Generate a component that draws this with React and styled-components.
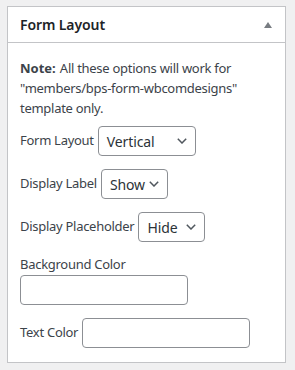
import React from "react";
import styled, { createGlobalStyle } from "styled-components";

const Global = createGlobalStyle`
  html, body { margin: 0; padding: 0; background: #f0f0f1; }
  body { font-family: "Noto Sans", "Open Sans", sans-serif; color: #3c434a; font-size: 13px; letter-spacing: -0.28px; }
  #root { padding: 6px 9px 8px 7px; }
`;

const Panel = styled.div`
  background: #fff;
  border: 1px solid #c3c4c7;
  box-sizing: border-box;
  width: 279px;
`;

const Header = styled.div`
  display: flex;
  align-items: center;
  justify-content: space-between;
  height: 35px;
  padding: 0 12px;
  border-bottom: 1px solid #c3c4c7;
`;

const Title = styled.h2`
  margin: 0;
  font-size: 14px;
  font-weight: 600;
  color: #1d2327;
  letter-spacing: -0.1px;
`;

const Toggle = styled.span`
  width: 0;
  height: 0;
  border-left: 4px solid transparent;
  border-right: 4px solid transparent;
  border-bottom: 6px solid #787c82;
  margin-right: 1px;
`;

const Body = styled.div`
  padding: 15px 12px 14px;
`;

const Note = styled.p`
  margin: 0 0 8px;
  line-height: 20px;
  color: #3c434a;
  strong { letter-spacing: 0; margin-right: 1px; }
`;

const Row = styled.div`
  display: flex;
  align-items: center;
  gap: 4px;
  margin-bottom: 13px;
  &:last-child { margin-bottom: 0; }
`;

const Stack = styled.div`
  display: flex;
  flex-direction: column;
  margin-bottom: 13px;
`;

const Label = styled.label`
  line-height: 1.5;
`;

const SelectBox = styled.div`
  position: relative;
  display: inline-flex;
  align-items: center;
  box-sizing: border-box;
  height: 30px;
  width: ${(p) => p.$w}px;
  padding: 0 24px 0 8px;
  border: 1px solid #8c8f94;
  border-radius: 4px;
  font-size: 14px;
  letter-spacing: -0.1px;
  color: #2c3338;
`;

const Chevron = styled.svg`
  position: absolute;
  right: 8px;
  top: 50%;
  margin-top: -3px;
`;

const Input = styled.div`
  box-sizing: border-box;
  width: 168px;
  height: 30px;
  border: 1px solid #8c8f94;
  border-radius: 4px;
  background: #fff;
`;

function Select({ w, children }) {
  return (
    <SelectBox $w={w}>
      {children}
      <Chevron width="10" height="6" viewBox="0 0 10 6">
        <path d="M0.8 0.8L5 5L9.2 0.8" fill="none" stroke="#50575e" strokeWidth="1.5" />
      </Chevron>
    </SelectBox>
  );
}

export default function App() {
  return (
    <>
      <Global />
      <Panel>
        <Header>
          <Title>Form Layout</Title>
          <Toggle />
        </Header>
        <Body>
          <Note>
            <strong>Note:</strong> All these options will work for "members/bps-form-wbcomdesigns" template only.
          </Note>
          <Row>
            <Label>Form Layout</Label>
            <Select w={98}>Vertical</Select>
          </Row>
          <Row>
            <Label>Display Label</Label>
            <Select w={67}>Show</Select>
          </Row>
          <Row>
            <Label>Display Placeholder</Label>
            <Select w={67}>Hide</Select>
          </Row>
          <Stack>
            <Label>Background Color</Label>
            <Input />
          </Stack>
          <Row>
            <Label>Text Color</Label>
            <Input />
          </Row>
        </Body>
      </Panel>
    </>
  );
}
